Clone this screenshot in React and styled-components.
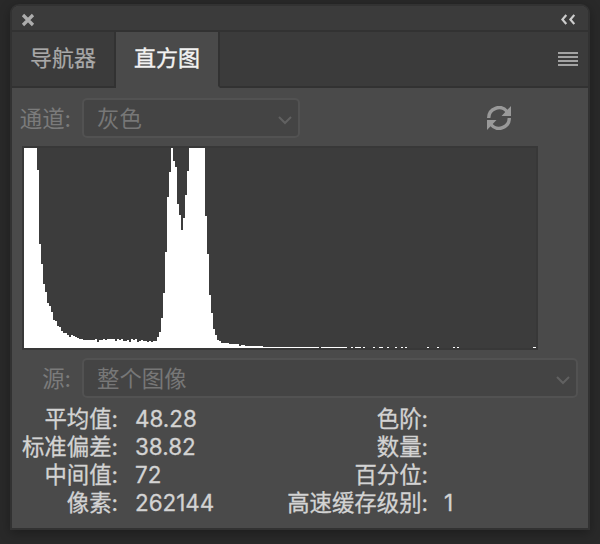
import React from "react";
import styled, { createGlobalStyle } from "styled-components";

const GlobalStyle = createGlobalStyle`
  * { box-sizing: border-box; }
  html, body { margin: 0; height: 100%; background: #292929; overflow: hidden; }
  body { font-family: Inter, "Noto Sans CJK SC", sans-serif; font-size: 22px; line-height: 28px; }
  svg { display: block; }
`;

const Desktop = styled.main`
  width: 600px;
  height: 544px;
  padding: 4px 10px 14px;
  background: #292929;
`;

const Panel = styled.section`
  width: 580px;
  height: 526px;
  border: 2px solid #323232;
  border-radius: 9px 9px 0 0;
  background: #4a4a4a;
  box-shadow: 0 3px 12px rgba(0, 0, 0, 0.3);
  overflow: hidden;
`;

const TitleBar = styled.header`
  display: flex;
  align-items: center;
  justify-content: space-between;
  height: 26px;
  padding: 3px 13px 0 9px;
  background: #3b3b3b;
  border-bottom: 2px solid #323232;
`;

const TabBar = styled.nav`
  display: flex;
  height: 56px;
  background: #3b3b3b;
`;

const Tab = styled.div`
  width: 104px;
  padding: 12px 0 0 18px;
  border-right: 2px solid #323232;
  border-bottom: 2px solid ${(p) => (p.$active ? "#4a4a4a" : "#323232")};
  background: ${(p) => (p.$active ? "#4a4a4a" : "#3b3b3b")};
  color: ${(p) => (p.$active ? "#f2f2f2" : "#a9a9a9")};
  -webkit-text-stroke: ${(p) => (p.$active ? 0.4 : 0.2)}px currentColor;
  white-space: nowrap;
`;

const TabRest = styled.div`
  flex: 1;
  display: flex;
  justify-content: flex-end;
  align-items: flex-start;
  padding: 20px 10px 0 0;
  border-bottom: 2px solid #323232;
`;

const Field = styled.div`
  display: flex;
  align-items: center;
  height: 40px;
  margin-top: ${(p) => p.$gap}px;
  font-size: 22.4px;
`;

const FieldLabel = styled.label`
  width: 59px;
  margin-right: 11px;
  padding-top: 2px;
  text-align: right;
  color: #7b7b7b;
  white-space: nowrap;
`;

const Select = styled.div`
  display: flex;
  align-items: center;
  justify-content: space-between;
  width: ${(p) => p.$width}px;
  height: 40px;
  padding: 2px 6px 0 13px;
  border: 2px solid #525252;
  border-radius: 5px;
  background: #444444;
  color: #777777;
`;

const SelectArrow = styled.svg`
  margin-top: 2px;
`;

const RefreshButton = styled.div`
  margin-left: 187px;
`;

const Chart = styled.div`
  width: 516px;
  height: 204px;
  margin: 8px 0 0 10px;
  padding: 2px;
  background: #383838;
`;

const Stats = styled.div`
  display: grid;
  grid-template-columns: 106px 160px 150px 120px;
  grid-auto-rows: 28px;
  margin-top: 7px;
  color: #d3d3d3;
  font-size: 22.4px;
  -webkit-text-stroke: 0.3px currentColor;
  white-space: nowrap;
`;

const StatLabel = styled.div`
  text-align: right;
`;

const StatValue = styled.div`
  padding-left: ${(p) => (p.$right ? 16 : 17)}px;
`;

// [left edge, top edge] of each step; a step runs to the next left edge.
const STEPS = [
  [24, 148], [37, 170], [39, 244], [41, 264], [43, 284], [45, 292], [47, 303], [49, 306],
  [51, 312], [53, 320], [55, 321], [57, 326], [59, 327], [61, 331], [63, 333], [67, 335],
  [69, 337], [71, 335], [73, 336], [75, 337], [77, 338], [79, 339], [83, 340], [95, 339],
  [97, 342], [99, 340], [103, 339], [105, 340], [107, 339], [115, 341], [117, 339],
  [119, 340], [121, 339], [123, 341], [127, 340], [129, 342], [131, 339], [133, 340],
  [135, 339], [137, 342], [139, 341], [141, 340], [143, 341], [147, 342], [149, 341],
  [151, 342], [153, 341], [157, 337], [159, 332], [161, 318], [163, 293], [165, 252],
  [167, 197], [169, 172], [171, 148], [173, 161], [175, 167], [177, 204], [179, 215],
  [181, 230], [183, 218], [185, 195], [187, 171], [189, 148], [205, 216], [207, 254],
  [209, 295], [211, 313], [213, 329], [215, 335], [217, 340], [219, 341], [221, 343],
  [229, 344], [239, 346], [241, 345], [245, 346], [263, 347], [319, 348], [321, 347],
  [347, 348], [351, 347], [353, 348], [355, 347], [361, 348], [363, 347], [365, 348],
  [373, 347], [375, 348], [379, 347], [383, 348], [387, 347], [389, 348], [395, 347],
  [397, 348], [401, 347], [403, 348], [405, 347], [407, 348], [427, 347], [429, 348],
  [437, 347], [439, 348], [453, 347], [455, 348], [457, 347], [459, 348], [533, 347],
];

const HISTOGRAM_PATH =
  "M24 348" + STEPS.map(([x, y]) => `H${x}V${y}`).join("") + "H536V348Z";

const Histogram = () => (
  <svg width="512" height="200" viewBox="24 148 512 200" shapeRendering="crispEdges">
    <rect x="24" y="148" width="512" height="200" fill="#3c3c3c" />
    <path d={HISTOGRAM_PATH} fill="#fff" />
  </svg>
);

const CloseIcon = () => (
  <svg width="14" height="14" viewBox="0 0 14 14">
    <path d="M2 2L12 12M12 2L2 12" stroke="#adadad" strokeWidth="3.2" />
  </svg>
);

const CollapseIcon = () => (
  <svg width="14" height="12" viewBox="0 0 14 12">
    <path d="M5.3 1L1.4 5.5L5.3 10M13.3 1L9.4 5.5L13.3 10" fill="none" stroke="#cccccc" strokeWidth="2.2" />
  </svg>
);

const MenuIcon = () => (
  <svg width="20" height="14" viewBox="0 0 20 14">
    <path d="M0 1H20M0 5H20M0 9H20M0 13H20" stroke="#a3a3a3" strokeWidth="2" />
  </svg>
);

const Chevron = () => (
  <SelectArrow width="14" height="9" viewBox="0 0 14 9">
    <path d="M1 1L7 7L13 1" fill="none" stroke="#616161" strokeWidth="2" />
  </SelectArrow>
);

const RefreshIcon = () => (
  <svg width="24" height="24" viewBox="0 0 24 24">
    <path d="M1.7 12A10.3 10.3 0 0 1 20 5.5M22.3 12A10.3 10.3 0 0 1 4 18.5" fill="none" stroke="#999" strokeWidth="3.4" />
    <path d="M24 0V10H14.5ZM0 24V14H9.5Z" fill="#999" />
  </svg>
);

const ROWS = [
  ["平均值:", "48.28", "色阶:", ""],
  ["标准偏差:", "38.82", "数量:", ""],
  ["中间值:", "72", "百分位:", ""],
  ["像素:", "262144", "高速缓存级别:", "1"],
];

export default function App() {
  return (
    <>
      <GlobalStyle />
      <Desktop>
        <Panel>
          <TitleBar>
            <CloseIcon />
            <CollapseIcon />
          </TitleBar>
          <TabBar>
            <Tab>导航器</Tab>
            <Tab $active>直方图</Tab>
            <TabRest>
              <MenuIcon />
            </TabRest>
          </TabBar>
          <Field $gap={10}>
            <FieldLabel>通道:</FieldLabel>
            <Select $width={218}>
              灰色
              <Chevron />
            </Select>
            <RefreshButton>
              <RefreshIcon />
            </RefreshButton>
          </Field>
          <Chart>
            <Histogram />
          </Chart>
          <Field $gap={8}>
            <FieldLabel>源:</FieldLabel>
            <Select $width={496}>
              整个图像
              <Chevron />
            </Select>
          </Field>
          <Stats>
            {ROWS.map(([label, value, rightLabel, rightValue]) => (
              <React.Fragment key={label}>
                <StatLabel>{label}</StatLabel>
                <StatValue>{value}</StatValue>
                <StatLabel>{rightLabel}</StatLabel>
                <StatValue $right>{rightValue}</StatValue>
              </React.Fragment>
            ))}
          </Stats>
        </Panel>
      </Desktop>
    </>
  );
}
